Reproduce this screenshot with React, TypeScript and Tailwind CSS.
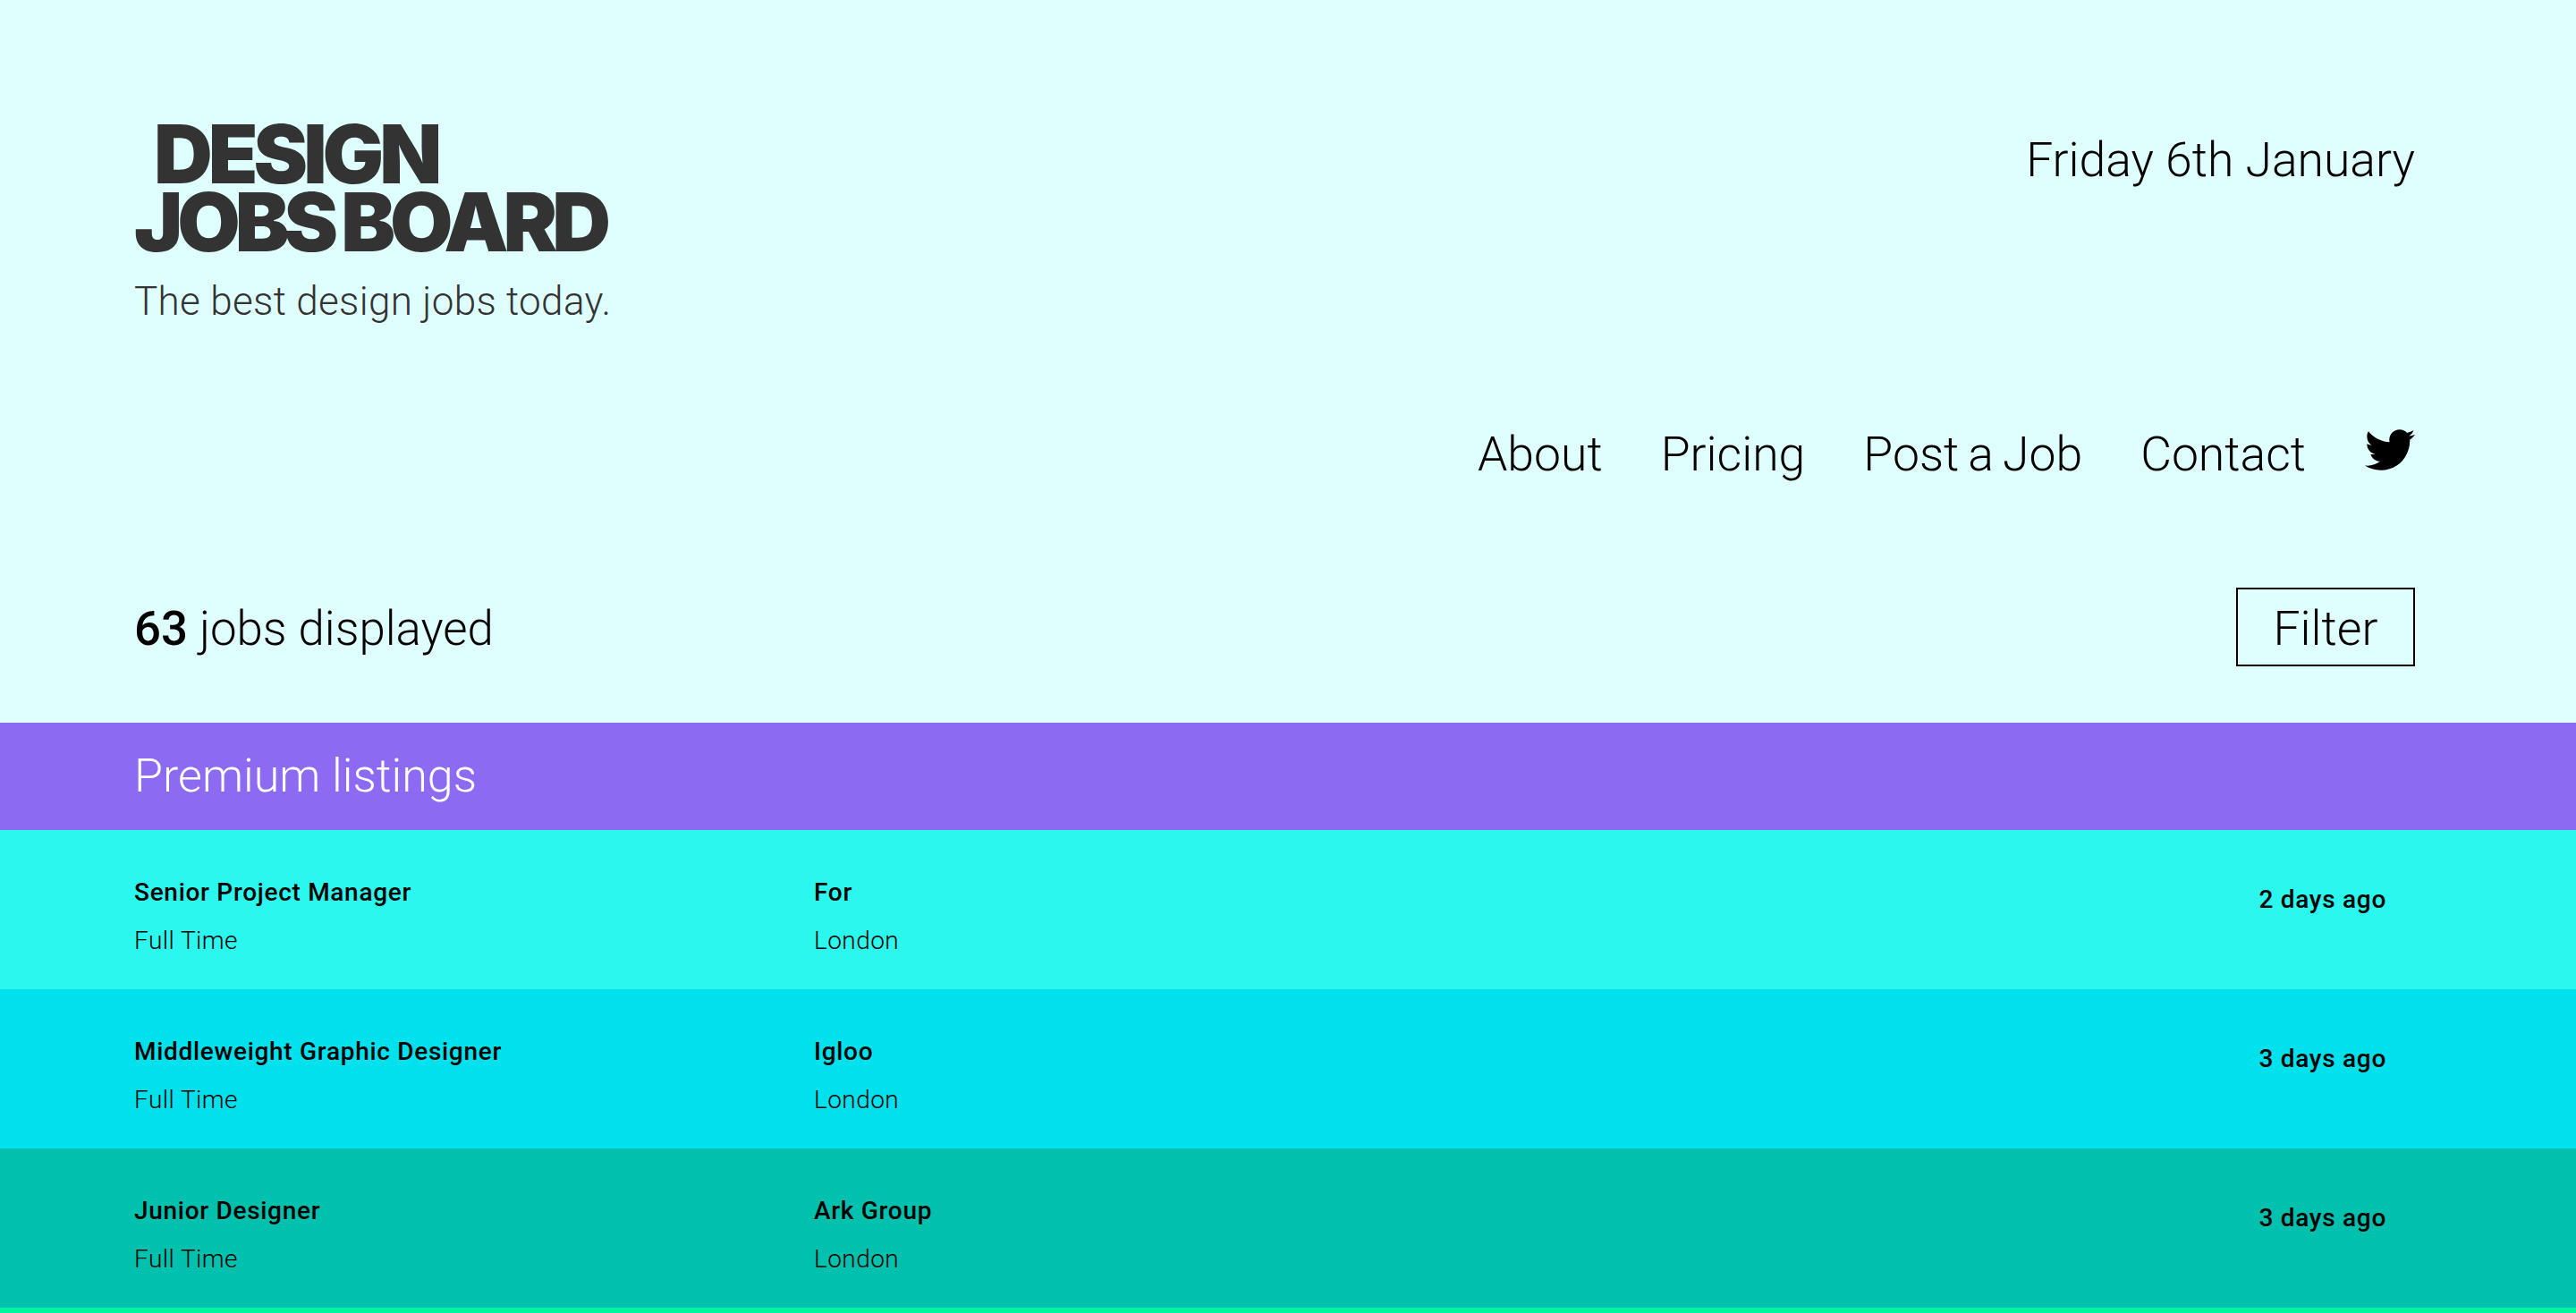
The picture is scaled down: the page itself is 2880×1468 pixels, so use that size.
import React from 'react';
import { FaTwitter } from 'react-icons/fa';

const jobs = [
  { title: 'Senior Project Manager', company: 'For', type: 'Full Time', city: 'London', age: '2 days ago', color: 'bg-[#2cf7ee]' },
  { title: 'Middleweight Graphic Designer', company: 'Igloo', type: 'Full Time', city: 'London', age: '3 days ago', color: 'bg-[#00e1ee]' },
  { title: 'Junior Designer', company: 'Ark Group', type: 'Full Time', city: 'London', age: '3 days ago', color: 'bg-[#00c1ae]' },
];

const navLinks = ['About', 'Pricing', 'Post a Job', 'Contact'];

export default function App() {
  return (
    <div className="h-[1468px] overflow-hidden bg-[#dfffff] font-['Roboto',sans-serif] text-black">
      <header className="h-[808px] pl-[150px] pr-[180px] pt-[132px]">
        <div className="flex items-start justify-between">
          <div>
            <h1 className="mt-[2px] font-['Inter',sans-serif] text-[91px] font-black leading-[76px] tracking-[-5px] text-[#333333] [word-spacing:-3px]">
              <span className="block pl-[22px]">DESIGN</span>
              <span className="block tracking-[-6px]">JOBS BOARD</span>
            </h1>
            <p className="mt-[25px] text-[44px] font-light leading-[52px] tracking-[0.33px] text-[#333333]">The best design jobs today.</p>
          </div>
          <p className="pt-[17px] text-[53.5px] font-light leading-[60px]">Friday 6th January</p>
        </div>
        <nav className="mt-[115px] flex items-start justify-end gap-[65px] text-[53.5px] font-light leading-[60px] [word-spacing:-3px]">
          {navLinks.map((link) => (
            <a key={link}>{link}</a>
          ))}
          <FaTwitter className="ml-[1px] mt-[-3px] h-[56px] w-[56px] text-black" />
        </nav>
        <div className="mt-[119px] flex items-center justify-between">
          <p className="pt-[4px] text-[52.8px] font-light leading-[60px]">
            <strong className="font-medium">63</strong> jobs displayed
          </p>
          <button className="h-[88px] w-[200px] border-2 border-black pt-[4px] text-[53.5px] font-light leading-[60px]">Filter</button>
        </div>
      </header>

      <h2 className="flex h-[120px] items-center bg-[#8c6af2] pl-[150px] text-[52px] font-light text-white">Premium listings</h2>

      {jobs.map((job) => (
        <div key={job.title} className={`flex h-[178px] pl-[150px] pr-[212px] pt-[52px] ${job.color}`}>
          <div className="w-[760px]">
            <p className="text-[28px] font-medium leading-[36px] tracking-[0.7px]">{job.title}</p>
            <p className="mt-[18px] text-[28px] font-light leading-[36px] tracking-[0.45px]">{job.type}</p>
          </div>
          <div className="flex-1">
            <p className="text-[28px] font-medium leading-[36px] tracking-[0.7px]">{job.company}</p>
            <p className="mt-[18px] text-[28px] font-light leading-[36px] tracking-[0.45px]">{job.city}</p>
          </div>
          <p className="pt-[8px] text-[28px] font-medium leading-[36px] tracking-[0.7px]">{job.age}</p>
        </div>
      ))}
      <div className="h-[6px] bg-[#00f5a0]" />
    </div>
  );
}
